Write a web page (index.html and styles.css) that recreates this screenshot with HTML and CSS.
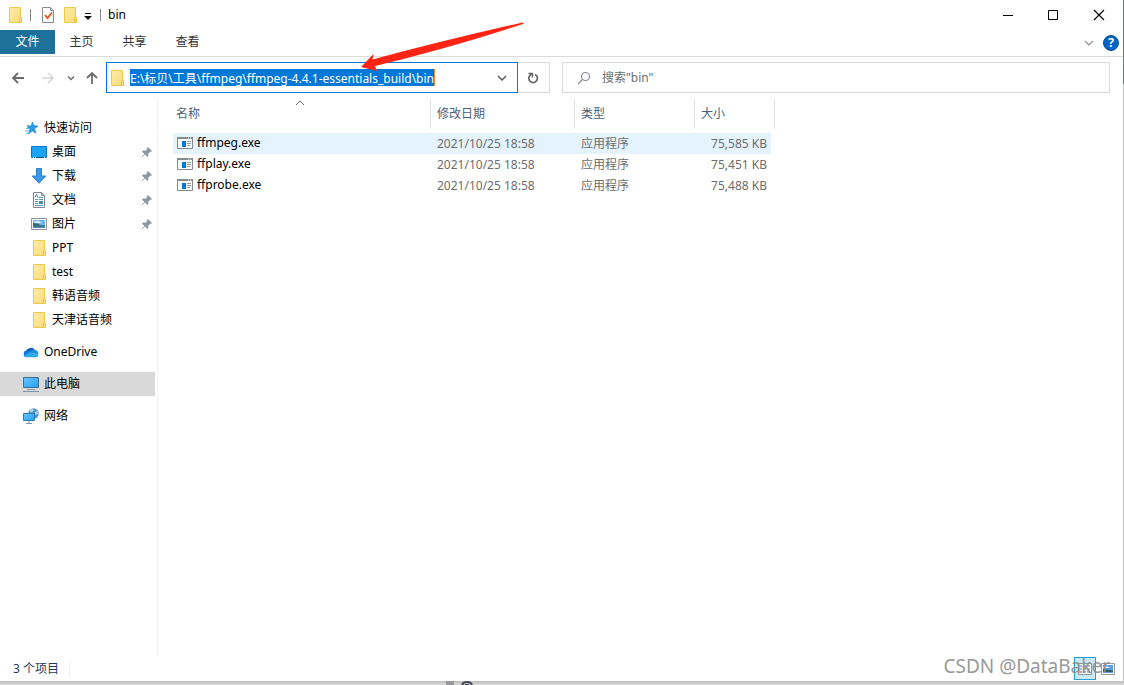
FILE: index.html
```html
<!DOCTYPE html>
<html lang="zh-CN">
<head>
<meta charset="utf-8">
<meta name="viewport" content="width=device-width, initial-scale=1">
<title>bin</title>
<link rel="stylesheet" href="styles.css">
</head>
<body>
<svg class="defs" width="0" height="0" aria-hidden="true">
  <defs>
    <linearGradient id="gold" x1="0" y1="0" x2="1" y2="1"><stop offset="0" stop-color="#ffeba6"/><stop offset="1" stop-color="#fbdc7b"/></linearGradient>
    <linearGradient id="sky" x1="0" y1="0" x2="1" y2="1"><stop offset="0" stop-color="#6cc6ff"/><stop offset="1" stop-color="#22a0f5"/></linearGradient>
  </defs>
  <symbol id="folder" viewBox="0 0 16 16">
    <path d="M2.500 .5h11v15h-11z" fill="url(#gold)" stroke="#efc850"/>
    <path d="M12.500 15.500v-4l1-1h1v5z" fill="#ffe89a" stroke="#e8bd3c"/>
  </symbol>
  <symbol id="pin" viewBox="0 0 12 12">
    <path d="M7 1l4 4-1 1-.8-.3-2 2 .2 2.300-1 1L4 8.500 1 11.500l-.5-.5 3-3L1 5.500l1-1 2.300.2 2-2L6 2z" fill="#8d99a3"/>
  </symbol>
  <symbol id="app" viewBox="0 0 16 16">
    <path d="M.5 2.500h15v11H.5z" fill="#f8f8f8" stroke="#868b8f"/>
    <path d="M0 2h16v2H0z" fill="#868b8f"/><path d="M11 3h1m1 0h1" stroke="#fff"/>
    <path d="M5 6h4v6H5z" fill="#0078d7"/>
    <path d="M10 6.500h4M10 8.500h4M10 10.500h3" stroke="#9a9a9a"/>
  </symbol>
</svg>

<div class="window">
  <header class="titlebar">
    <svg class="icon" viewBox="0 0 16 16"><use href="#folder"/></svg>
    <span class="divider"></span>
    <button class="quick" aria-label="属性"><svg class="icon" viewBox="0 0 16 16"><path d="M2.500 .5h8l3 3v12h-11z" fill="#fafafa" stroke="#8a8a8a"/><path d="M10.500 .5v3h3" fill="none" stroke="#8a8a8a"/><path d="M5 8l2.500 3L12 5.500" fill="none" stroke="#e8501e" stroke-width="1.800"/></svg></button>
    <button class="quick folder-button" aria-label="新建文件夹"><svg class="icon" viewBox="0 0 16 16"><use href="#folder"/></svg></button>
    <button class="quick more" aria-label="自定义快速访问工具栏"><svg width="8" height="8" viewBox="0 0 8 8"><path d="M1 1.500h6" stroke="#111"/><path d="M0 4h8L4 8z" fill="#111"/></svg></button>
    <span class="divider"></span>
    <h1>bin</h1>
    <div class="controls">
      <button aria-label="最小化"><svg width="12" height="12" viewBox="0 0 12 12"><path d="M1 6.500h10" stroke="#000"/></svg></button>
      <button aria-label="最大化"><svg width="12" height="12" viewBox="0 0 12 12"><path d="M1.500 1.500h9v9h-9z" fill="none" stroke="#000"/></svg></button>
      <button aria-label="关闭"><svg width="12" height="12" viewBox="0 0 12 12"><path d="M1 1l10 10M11 1L1 11" stroke="#000" stroke-width="1.200"/></svg></button>
    </div>
  </header>

  <nav class="ribbon">
    <button class="tab file">文件</button>
    <button class="tab">主页</button>
    <button class="tab">共享</button>
    <button class="tab">查看</button>
    <div class="ribbon-end">
      <button aria-label="展开功能区"><svg width="10" height="8" viewBox="0 0 10 8"><path d="M1 2l4 4 4-4" fill="none" stroke="#9a9a9a" stroke-width="1.400"/></svg></button>
      <button class="help" aria-label="帮助">?</button>
    </div>
  </nav>

  <div class="address-row">
    <div class="history">
      <button aria-label="后退"><svg width="14" height="14" viewBox="0 0 14 14"><path d="M13 7H2M7 2L2 7l5 5" fill="none" stroke="#6b6b6b" stroke-width="1.800"/></svg></button>
      <button aria-label="前进"><svg width="14" height="14" viewBox="0 0 14 14"><path d="M1 7h11M7 2l5 5-5 5" fill="none" stroke="#d6d6d6" stroke-width="1.600"/></svg></button>
      <button aria-label="最近位置"><svg width="8" height="8" viewBox="0 0 8 8"><path d="M1 2.500l3 3 3-3" fill="none" stroke="#707070" stroke-width="1.500"/></svg></button>
      <button aria-label="上移"><svg width="14" height="14" viewBox="0 0 14 14"><path d="M7 13V2M2 7l5-5 5 5" fill="none" stroke="#6b6b6b" stroke-width="1.800"/></svg></button>
    </div>
    <div class="location">
      <div class="address">
        <svg class="icon" viewBox="0 0 16 16"><use href="#folder"/></svg>
        <input type="text" aria-label="地址" size="44" value="E:\标贝\工具\ffmpeg\ffmpeg-4.4.1-essentials_build\bin">
        <button aria-label="以前的位置"><svg width="10" height="8" viewBox="0 0 10 8"><path d="M1 2l4 4 4-4" fill="none" stroke="#555" stroke-width="1.400"/></svg></button>
      </div>
      <button class="refresh" aria-label="刷新"><svg width="12" height="12" viewBox="0 0 12 12"><path d="M8 2.400A4.300 4.300 0 1 1 3 3.300L4.500 2" fill="none" stroke="#666" stroke-width="1.700"/><path d="M1.500 1.500h4v4" fill="none" stroke="#666" stroke-width="1.500"/></svg></button>
    </div>
    <label class="search">
      <svg width="14" height="14" viewBox="0 0 14 14"><circle cx="8.500" cy="5.500" r="4" fill="none" stroke="#8b8b98" stroke-width="1.200"/><path d="M5.500 8.500L1 13" stroke="#8b8b98" stroke-width="1.300"/></svg>
      <input type="text" aria-label="搜索" placeholder='搜索"bin"'>
    </label>
  </div>

  <main class="content">
    <nav class="tree">
      <ul>
        <li><a href="#"><svg class="icon" viewBox="0 0 16 16"><path d="M9.500 2l1.300 3.600 4.200.4-3.500 2.700 1.600 4.600-3.900-2.400L5.500 14l1.200-4.600L4 6.700l4-.6z" fill="#2b9fe6" stroke="#1484cf" stroke-width=".6"/><path d="M4 5.500h3M3 8.500h4M2 11h4M3 13.500h3" stroke="#5cb8ef"/></svg>快速访问</a></li>
        <li><a class="child" href="#"><svg class="icon" viewBox="0 0 16 16"><path d="M.5 2.500h15v11H.5z" fill="#1ba3f8" stroke="#0876c8"/><path d="M1 13.500h14" stroke="#075a9c"/><path d="M2 13.500h1m1 0h1m8 0h1" stroke="#fff"/></svg>桌面<svg class="pin"><use href="#pin"/></svg></a></li>
        <li><a class="child" href="#"><svg class="icon" viewBox="0 0 16 16"><path d="M5.500 .5h5V8h4.300L8 15.300 1.200 8h4.300z" fill="#3b97e8" stroke="#2b83d2"/></svg>下载<svg class="pin"><use href="#pin"/></svg></a></li>
        <li><a class="child" href="#"><svg class="icon" viewBox="0 0 16 16"><path d="M2.500 .5h8l3 3v12h-11z" fill="#fff" stroke="#858585"/><path d="M10.500 .5v3h3" fill="none" stroke="#858585"/><path d="M4 5.500l1.500-3 1.500 3" fill="none" stroke="#3183bd"/><path d="M8 5.500h4M4 7.500h3M8 7.500h4M4 9.500h3M4 11.500h3M4 13.500h8" stroke="#559cc8"/><path d="M8 9h4v3H8z" fill="#498eab"/></svg>文档<svg class="pin"><use href="#pin"/></svg></a></li>
        <li><a class="child" href="#"><svg class="icon" viewBox="0 0 16 16"><path d="M.5 2.500h15v11H.5z" fill="#fff" stroke="#929292"/><path d="M2 4h12v8H2z" fill="#70b5ed"/><path d="M3 6q4-3 8 1H3z" fill="#d5edfa"/><path d="M2 7q5 0 7 2l5 .5V12H2z" fill="#376d6e"/><path d="M2 10.500h12V12H2z" fill="#4c8bc1"/></svg>图片<svg class="pin"><use href="#pin"/></svg></a></li>
        <li><a class="child" href="#"><svg class="icon" viewBox="0 0 16 16"><use href="#folder"/></svg>PPT</a></li>
        <li><a class="child" href="#"><svg class="icon" viewBox="0 0 16 16"><use href="#folder"/></svg>test</a></li>
        <li><a class="child" href="#"><svg class="icon" viewBox="0 0 16 16"><use href="#folder"/></svg>韩语音频</a></li>
        <li><a class="child" href="#"><svg class="icon" viewBox="0 0 16 16"><use href="#folder"/></svg>天津话音频</a></li>
      </ul>
      <a href="#"><svg class="icon" viewBox="0 0 16 16"><path d="M3 7a5 4.500 0 0 1 9-1l-5 7z" fill="#0a5fb8"/><path d="M3.500 6.500q2-.5 4 1L5 13H3a3 3.300 0 0 1 .5-6.500z" fill="#1176cf"/><path d="M7 7.500q1.500-2.500 5-1.500a3.500 3.500 0 0 1 3 5z" fill="#1b8fe0"/><path d="M1 12.300l6-4.500 8.500 3.500q-.3 2-2.500 2H3.500Q2 13.300 1 12.300z" fill="#29a8ed"/></svg>OneDrive</a>
      <a class="selected" href="#" aria-current="page"><svg class="icon" viewBox="0 0 16 16"><path d="M.5 1.500h15v10H.5z" fill="url(#sky)" stroke="#3f6f92"/><path d="M4 13.500h8" stroke="#8ba1b5"/><path d="M0 15.500h16" stroke="#8198ae"/></svg>此电脑</a>
      <a href="#"><svg class="icon" viewBox="0 0 16 16"><circle cx="10.500" cy="5.500" r="5.300" fill="#4f94bc"/><path d="M7 2q2-1.500 4-.5l-1 2-3 1zM12 4l2.500-1 .5 3-2.500 1z" fill="#b4d8e8"/><path d="M.5 5.500h11v7H.5z" fill="url(#sky)" stroke="#277db4"/><path d="M6 13v2M3 15.500h6" stroke="#7b97aa"/></svg>网络</a>
    </nav>

    <section class="files">
      <table>
        <colgroup><col class="name-col"><col class="date-col"><col class="type-col"><col class="size-col"></colgroup>
        <thead><tr>
          <th aria-sort="ascending"><div>名称<svg class="sort" width="10" height="6" viewBox="0 0 10 6"><path d="M1 5l4-4 4 4" fill="none" stroke="#666"/></svg></div></th>
          <th><div>修改日期</div></th><th><div>类型</div></th><th><div>大小</div></th>
        </tr></thead>
        <tbody>
          <tr class="hover"><td><span class="file-name"><svg class="icon" viewBox="0 0 16 16"><use href="#app"/></svg>ffmpeg.exe</span></td><td>2021/10/25 18:58</td><td>应用程序</td><td>75,585 KB</td></tr>
          <tr><td><span class="file-name"><svg class="icon" viewBox="0 0 16 16"><use href="#app"/></svg>ffplay.exe</span></td><td>2021/10/25 18:58</td><td>应用程序</td><td>75,451 KB</td></tr>
          <tr><td><span class="file-name"><svg class="icon" viewBox="0 0 16 16"><use href="#app"/></svg>ffprobe.exe</span></td><td>2021/10/25 18:58</td><td>应用程序</td><td>75,488 KB</td></tr>
        </tbody>
      </table>
    </section>
  </main>

  <footer class="status">
    <span>3 个项目</span>
    <div class="views">
      <button class="active" aria-label="详细信息"><svg width="16" height="14" viewBox="0 0 16 14"><path d="M1.500 1.500h13v11h-13z" fill="#eaf6fc" stroke="#8998a2"/><path d="M3 4h2M3 7h2" stroke="#4b8fca"/><path d="M3 10h2" stroke="#dc3c34"/><path d="M6 4h3m1 0h3M6 7h3m1 0h3M6 10h3m1 0h3" stroke="#7d8b93"/></svg></button>
      <button aria-label="大缩略图"><svg width="14" height="12" viewBox="0 0 14 12"><path d="M.5 .5h13v11H.5z" fill="#fff" stroke="#999"/><path d="M2 2h10v8H2z" fill="#5c9ee6"/><path d="M2 4q5-2 7 1H2z" fill="#dceefa"/><path d="M2 6l10 1.500V9H2z" fill="#285f64"/></svg></button>
    </div>
    <span class="watermark">CSDN @DataBaker</span>
  </footer>
</div>
<div class="backdrop"><svg width="30" height="4" viewBox="0 0 30 4"><path d="M0 0h8v4H0z" fill="#999"/><path d="M16 4q1-3 5-3t5 3" fill="none" stroke="#46465a" stroke-width="2"/><path d="M19 4h4" stroke="#46465a" stroke-width="2"/></svg></div>
<svg class="arrow" width="164" height="50" viewBox="0 0 164 50" aria-hidden="true"><path d="M1 46L13.500 33l-1 5.500Q85 19 162.500 1.500q2 0 .5 1.500Q90 27 15 45l2 5z" fill="#ff2414"/></svg>
</body>
</html>
```
FILE: styles.css
```css
* { box-sizing: border-box; }

body {
  margin: 0;
  min-height: 100vh;
  display: flex;
  flex-direction: column;
  position: relative;
  background: #fff;
  color: #000;
  font: 12px/16px "Noto Sans", "Noto Sans CJK SC", sans-serif;
}

button, input { font: inherit; color: inherit; }
button { border: 0; padding: 0; background: none; display: flex; align-items: center; justify-content: center; white-space: nowrap; }
a { color: inherit; text-decoration: none; }
svg { display: block; flex: none; }
.defs { position: absolute; }
.icon { width: 16px; height: 16px; }

.window {
  flex: 1;
  display: flex;
  flex-direction: column;
  border-right: 1px solid;
  border-image: linear-gradient(#73796f 0, #73796f 85px, #c6c6c6 85px) 1;
}

.titlebar { height: 30px; display: flex; align-items: center; padding-left: 7px; }
.divider { width: 1px; height: 12px; margin: 0 9px 0 7px; background: #858585; }
.folder-button { margin-left: 6px; }
.more { width: 8px; margin: 0 1px 0 6px; padding-top: 2px; }
.titlebar h1 { margin: 0; font-size: 12px; font-weight: 400; }
.more + .divider { margin-right: 7px; }
.controls { display: flex; margin-left: auto; }
.controls button { width: 45px; height: 30px; }
.controls button:last-child { width: 48px; }

.ribbon { height: 27px; display: flex; align-items: flex-start; border-bottom: 1px solid #dadbdc; }
.tab { width: 53px; height: 24px; color: #333; }
.tab.file { width: 55px; background: #1e7199; color: #fff; }
.ribbon-end { margin-left: auto; margin-right: 4px; display: flex; align-items: center; gap: 9px; padding-top: 5px; }
.help { width: 16px; height: 16px; border-radius: 50%; background: #0066c5; border: 1px solid #0a4f94; color: #fff; font-weight: 700; line-height: 14px; }

.address-row { display: flex; align-items: center; height: 41px; padding-right: 13px; }
.history { width: 106px; flex: none; display: flex; align-items: center; padding-left: 11px; }
.history button:nth-child(2) { margin-left: 16px; }
.history button:nth-child(3) { margin-left: 12px; }
.history button:nth-child(4) { margin-left: 10px; }
.location { flex: 443 1 0; display: flex; height: 31px; min-width: 0; }
.address { flex: 1; min-width: 0; display: flex; align-items: center; border: 1px solid #0078d7; padding: 0 10px 0 2px; }
.address input {
  field-sizing: content;
  height: 17px;
  margin-left: 5px;
  padding: 0;
  border: 0;
  border-right: 1px solid #f08a28;
  outline: 0;
  background: #0078d7;
  color: #fff;
  min-width: 0;
}
.address button { margin-left: auto; }
.refresh { width: 32px; border: 1px solid #d9d9d9; border-left: 0; }
.search { flex: 517 1 0; min-width: 0; height: 31px; margin-left: 12px; display: flex; align-items: center; gap: 11px; padding: 0 14px; border: 1px solid #d9d9d9; }
.search input { flex: 1; min-width: 0; border: 0; padding: 0; outline: 0; background: none; }
.search input::placeholder { color: #6d6d6d; opacity: 1; }

.content { flex: 1; display: flex; }
.tree { width: 158px; flex: none; display: flex; flex-direction: column; gap: 8px; padding: 18px 2px 0 0; border-right: 1px solid #f3f3f3; }
.tree ul { list-style: none; margin: 0; padding: 0; }
.tree a { height: 24px; display: flex; align-items: center; gap: 5px; padding: 0 2px 0 23px; }
.tree a.child { padding-left: 31px; }
.tree .selected { background: #d9d9d9; }
.pin { width: 12px; height: 12px; margin-left: auto; }

.files { flex: 1; min-width: 0; padding-left: 15px; }
table { width: 602px; table-layout: fixed; border-spacing: 0; }
.name-col { width: 258px; }
.date-col { width: 144px; }
.type-col { width: 120px; }
.size-col { width: 80px; }
th { height: 35px; padding: 1px 0 4px; font-weight: 400; text-align: left; color: #4c607a; }
th div { position: relative; height: 30px; display: flex; align-items: center; padding-left: 6px; border-right: 1px solid #e2e2e2; }
th:first-child div { padding-left: 3px; }
.sort { position: absolute; top: 1px; left: 122px; }
td { height: 21px; padding: 0 0 0 6px; color: #6d6d6d; white-space: nowrap; }
td:first-child { padding: 0 0 1px 4px; color: #000; }
td:last-child { text-align: right; padding-right: 4px; border-right: 4px solid #fff; }
.file-name { display: flex; align-items: center; gap: 4px; }
.hover td { background: #e5f3ff; }

.status { position: relative; height: 25px; display: flex; align-items: center; padding: 0 8px 0 13px; color: #1e395b; }
.status > span:first-child { padding-right: 10px; border-right: 1px solid #f0f0f0; }
.views { display: flex; align-items: center; gap: 5px; margin-left: auto; }
.views .active { width: 22px; height: 23px; background: #cbe8f6; border: 1px solid #26a0da; }
.watermark { position: absolute; right: 13px; top: -2px; font: 19px/24px "Noto Sans", sans-serif; color: #8e8e8e; opacity: .9; }

.backdrop { height: 4px; padding-left: 446px; background: linear-gradient(#bdbdbd, #d9d9d9); }

.arrow { position: absolute; left: 360px; top: 21px; pointer-events: none; }
```
